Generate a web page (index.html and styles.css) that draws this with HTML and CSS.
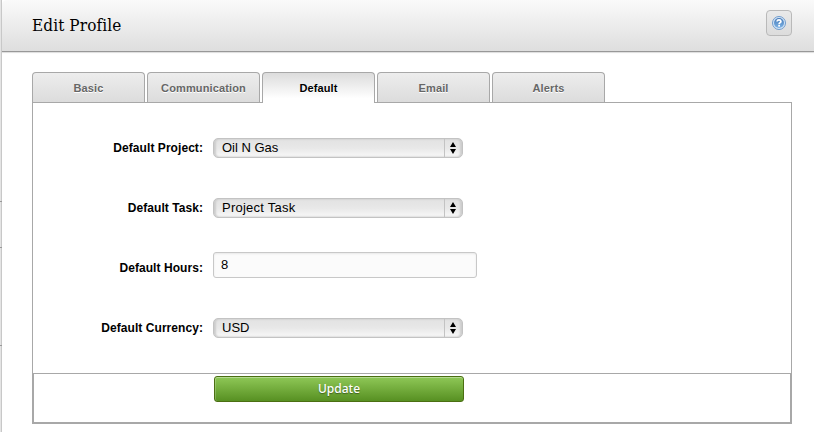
FILE: index.html
```html
<!DOCTYPE html>
<html lang="en">
<head>
<meta charset="utf-8">
<title>Edit Profile</title>
<link rel="stylesheet" href="styles.css">
</head>
<body>
<div class="gutter"><i class="tick tick-a"></i><i class="tick tick-b"></i><i class="tick tick-c"></i></div>
<main class="page">
  <header class="header">
    <h1 class="title">Edit Profile</h1>
    <button class="help" aria-label="Help">
      <svg width="14" height="14" viewBox="0 0 14 14">
        <defs><linearGradient id="blue" x1="0" y1="0" x2="0" y2="1"><stop offset="0" stop-color="#4479b8"/><stop offset="1" stop-color="#7fb4e6"/></linearGradient></defs>
        <circle cx="7" cy="7" r="6.5" fill="#d5e5f5" stroke="#6f9bcd"/>
        <circle cx="7" cy="7" r="5" fill="url(#blue)"/>
        <path d="M5 5.5Q5.2 3.8 7 3.8T8.9 5.4Q8.9 6.2 7.9 6.8Q7.1 7.2 7.1 8.3" fill="none" stroke="#fff" stroke-width="1.7"/>
        <rect x="6.2" y="9" width="1.8" height="1.6" fill="#fff"/>
      </svg>
    </button>
  </header>
  <nav class="tabs">
    <a class="tab">Basic</a>
    <a class="tab">Communication</a>
    <a class="tab active">Default</a>
    <a class="tab">Email</a>
    <a class="tab">Alerts</a>
  </nav>
  <section class="panel">
    <div class="fields">
      <div class="row"><span class="label">Default Project:</span><div class="select"><span class="value">Oil N Gas</span><span class="arrows"><svg width="6" height="12" viewBox="0 0 6 12"><path d="M3 0L6 5H0ZM0 7H6L3 12Z"/></svg></span></div></div>
      <div class="row"><span class="label">Default Task:</span><div class="select"><span class="value task">Project Task</span><span class="arrows"><svg width="6" height="12" viewBox="0 0 6 12"><path d="M3 0L6 5H0ZM0 7H6L3 12Z"/></svg></span></div></div>
      <div class="row"><span class="label">Default Hours:</span><div class="input">8</div></div>
      <div class="row"><span class="label">Default Currency:</span><div class="select"><span class="value">USD</span><span class="arrows"><svg width="6" height="12" viewBox="0 0 6 12"><path d="M3 0L6 5H0ZM0 7H6L3 12Z"/></svg></span></div></div>
    </div>
    <div class="actions"><button class="update">Update</button></div>
  </section>
</main>
</body>
</html>
```
FILE: styles.css
```css
* { box-sizing: border-box; }
body {
  margin: 0;
  height: 432px;
  overflow: hidden;
  display: flex;
  background: #fff;
  color: #000;
  font-family: "Liberation Sans", Arial, sans-serif;
}
.gutter {
  position: relative;
  width: 2px;
  background: #e4e4e4;
  border-right: 1px solid #c8c8c8;
}
.tick { position: absolute; left: 0; width: 2px; height: 1px; background: #999; }
.tick-a { top: 201px; }
.tick-b { top: 247px; }
.tick-c { top: 345px; }
.page { flex: 1; }
.header {
  height: 52px;
  padding: 0 22px 6px 30px;
  display: flex;
  align-items: center;
  justify-content: space-between;
  background: linear-gradient(#fafafa, #dedede);
  border-bottom: 1px solid #989898;
  border-top-left-radius: 5px;
  box-shadow: 0 1px 1px #ddd;
}
.title {
  margin: 5px 0 0;
  font: 17px/24px "DejaVu Serif Condensed", "DejaVu Serif", serif;
  font-stretch: condensed;
  letter-spacing: 0.1px;
}
.help {
  width: 26px;
  height: 26px;
  padding: 0;
  display: flex;
  align-items: center;
  justify-content: center;
  border: 1px solid #b9b9b9;
  border-radius: 4px;
  background: linear-gradient(#e9e9e9, #dcdcdc);
}
.tabs { display: flex; gap: 2px; padding: 20px 30px 0; }
.tab {
  width: 113px;
  height: 30px;
  border: 1px solid #a8a8a8;
  border-bottom: 0;
  border-radius: 4px 4px 0 0;
  background: linear-gradient(#ededed, #dcdcdc);
  color: #666;
  font-size: 11px;
  font-weight: bold;
  letter-spacing: 0.13px;
  line-height: 31px;
  text-align: center;
  text-shadow: 0 1px 0 #fff;
}
.tab.active {
  position: relative;
  height: 31px;
  margin-bottom: -1px;
  background: linear-gradient(#dcdcdc, #fff 85%);
  color: #000;
}
.panel {
  width: 760px;
  height: 322px;
  margin-left: 30px;
  border: 1px solid #a8a8a8;
}
.fields { height: 270px; padding-top: 15px; }
.row { height: 60px; display: flex; align-items: center; gap: 10px; }
.label {
  width: 170px;
  text-align: right;
  font-size: 12px;
  font-weight: bold;
  letter-spacing: 0.06px;
  line-height: 14px;
}
.select {
  width: 250px;
  height: 20px;
  display: flex;
  border: 1px solid #c3c3c3;
  border-radius: 5px;
  background: linear-gradient(#e2e2e2, #e8e8e8 50%, #f8f8f8);
  box-shadow: inset 2px 0 2px #ccc, inset -2px 0 2px #ccc;
}
.value { flex: 1; padding-left: 8px; font-size: 13px; line-height: 18px; }
.value.task { letter-spacing: 0.25px; }
.arrows {
  width: 18px;
  padding-right: 2px;
  display: flex;
  align-items: center;
  justify-content: center;
  border-left: 1px solid #c3c3c3;
}
.input {
  width: 264px;
  height: 26px;
  margin-bottom: 6px;
  padding-left: 7px;
  border: 1px solid #c8c8c8;
  border-radius: 3px;
  background: #fbfbfb;
  box-shadow: inset 0 1px 2px #e8e8e8;
  font-size: 13px;
  line-height: 24px;
}
.actions { height: 50px; padding: 2px 0 0 180px; border: 1px solid #a8a8a8; }
.update {
  display: block;
  width: 250px;
  height: 26px;
  padding: 0;
  border: 1px solid #4b6f12;
  border-radius: 3px;
  background: linear-gradient(#8fc857, #579022);
  box-shadow: inset 0 1px 0 #b4da91, inset 1px 0 0 rgba(255, 255, 255, .2);
  color: #fff;
  font: 500 12px/22px "Noto Sans", "Open Sans", sans-serif;
  text-shadow: 0 1px 1px rgba(0, 0, 0, .4);
}
```
